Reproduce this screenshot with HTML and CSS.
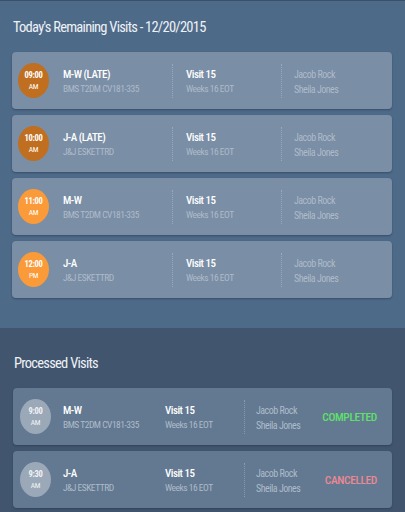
FILE: index.html
```html
<!DOCTYPE html>
<html>
<head>
<meta charset="utf-8">
<link rel="stylesheet" href="styles.css">
</head>
<body>
<section class="today">
  <h1 class="heading">Today's Remaining Visits - 12/20/2015</h1>
  <div class="list">
    <div class="card">
      <div class="time late"><b>09:00</b><span>AM</span></div>
      <div class="col study"><div class="main">M-W (LATE)</div><div class="sub">BMS T2DM CV181-335</div></div>
      <div class="col visit"><div class="main">Visit 15</div><div class="sub">Weeks 16 EOT</div></div>
      <div class="col people"><div>Jacob Rock</div><div>Sheila Jones</div></div>
    </div>
    <div class="card">
      <div class="time late"><b>10:00</b><span>AM</span></div>
      <div class="col study"><div class="main">J-A (LATE)</div><div class="sub">J&amp;J ESKETTRD</div></div>
      <div class="col visit"><div class="main">Visit 15</div><div class="sub">Weeks 16 EOT</div></div>
      <div class="col people"><div>Jacob Rock</div><div>Sheila Jones</div></div>
    </div>
    <div class="card">
      <div class="time due"><b>11:00</b><span>AM</span></div>
      <div class="col study"><div class="main">M-W</div><div class="sub">BMS T2DM CV181-335</div></div>
      <div class="col visit"><div class="main">Visit 15</div><div class="sub">Weeks 16 EOT</div></div>
      <div class="col people"><div>Jacob Rock</div><div>Sheila Jones</div></div>
    </div>
    <div class="card">
      <div class="time due"><b>12:00</b><span>PM</span></div>
      <div class="col study"><div class="main">J-A</div><div class="sub">J&amp;J ESKETTRD</div></div>
      <div class="col visit"><div class="main">Visit 15</div><div class="sub">Weeks 16 EOT</div></div>
      <div class="col people"><div>Jacob Rock</div><div>Sheila Jones</div></div>
    </div>
  </div>
</section>
<section class="processed">
  <h1 class="heading">Processed Visits</h1>
  <div class="list">
    <div class="card done">
      <div class="time grey"><b>9:00</b><span>AM</span></div>
      <div class="col study"><div class="main">M-W</div><div class="sub">BMS T2DM CV181-335</div></div>
      <div class="col visit"><div class="main">Visit 15</div><div class="sub">Weeks 16 EOT</div></div>
      <div class="col people"><div>Jacob Rock</div><div>Sheila Jones</div></div>
      <div class="status ok">COMPLETED</div>
    </div>
    <div class="card done">
      <div class="time grey"><b>9:30</b><span>AM</span></div>
      <div class="col study"><div class="main">J-A</div><div class="sub">J&amp;J ESKETTRD</div></div>
      <div class="col visit"><div class="main">Visit 15</div><div class="sub">Weeks 16 EOT</div></div>
      <div class="col people"><div>Jacob Rock</div><div>Sheila Jones</div></div>
      <div class="status bad">CANCELLED</div>
    </div>
  </div>
</section>
</body>
</html>
```
FILE: styles.css
```css
* { box-sizing: border-box; }
html, body { margin: 0; padding: 0; }
body {
  width: 405px;
  height: 512px;
  overflow: hidden;
  background: #41556f;
  font-family: "Roboto Condensed", "Liberation Sans Narrow", Roboto, sans-serif;
  color: #fff;
}
.today {
  background: #4e6a89;
  border-top: 1px solid #3b4f66;
  padding: 16px 13px 30px 12px;
}
.processed {
  padding: 25px 13px 0 13px;
}
.heading {
  margin: 0 0 13px 1px;
  font-weight: 400;
  font-size: 14.5px;
  letter-spacing: -0.75px;
  line-height: 22px;
  color: #eef2f6;
}
.list {
  display: flex;
  flex-direction: column;
  gap: 6px;
}
.card {
  height: 57px;
  background: #7a8ea6;
  border-radius: 4px;
  box-shadow: 0 1px 2px rgba(30, 45, 65, 0.45);
  display: flex;
  align-items: center;
  padding: 0 0 0 6px;
}
.card.done {
  background: #627991;
  padding-left: 7px;
}
.time {
  width: 31px;
  height: 35px;
  border-radius: 50%;
  display: flex;
  flex-direction: column;
  align-items: center;
  justify-content: center;
  flex: none;
  color: #fff;
  line-height: 11px;
  letter-spacing: -0.3px;
}
.time b { font-size: 8.5px; font-weight: 700; }
.time span { font-size: 7.5px; }
.time.late { background: #bf6f1f; }
.time.due { background: #fb9a38; }
.time.grey { background: #9aa8b7; color: #f0f3f6; }
.col {
  display: flex;
  flex-direction: column;
  justify-content: center;
  align-self: stretch;
  margin: 12px 0 11px;
  letter-spacing: -0.5px;
}
.study { margin-left: 14px; width: 110px; border-right: 1px dotted rgba(210, 220, 232, 0.35); }
.visit { padding-left: 13px; width: 109px; border-right: 1px dotted rgba(210, 220, 232, 0.35); }
.people { padding-left: 12px; color: #aebbc9; font-size: 10px; line-height: 15px; padding-top: 2px; }
.done .study { margin-left: 12px; width: 102px; border-right: none; }
.done .visit { padding-left: 0; width: 80px; }
.done .people { padding-left: 11px; }
.main { font-size: 11px; line-height: 15px; font-weight: 500; color: #fff; }
.sub { font-size: 9.5px; line-height: 14px; color: #aebbc9; }
.status {
  margin-left: auto;
  margin-right: 15px;
  font-size: 11.5px;
  letter-spacing: -0.4px;
  font-weight: 500;
}
.status.ok { color: #5fe06b; }
.status.bad { color: #ec8891; }
```
